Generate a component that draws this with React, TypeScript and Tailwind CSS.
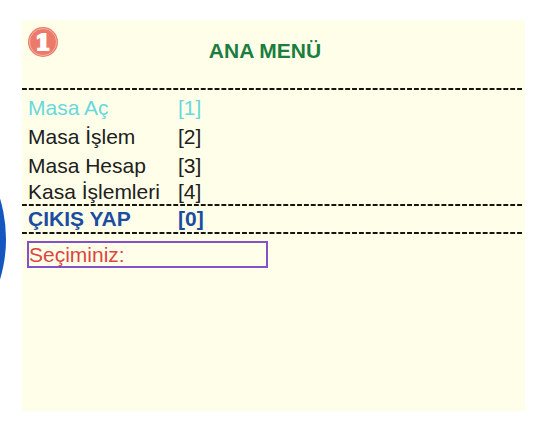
import React from "react";

const items = [
  { label: "Masa Aç", code: "[1]", style: "h-[29px] text-[#69d8dd]" },
  { label: "Masa İşlem", code: "[2]", style: "h-[29px] text-[#20201c]" },
  { label: "Masa Hesap", code: "[3]", style: "h-[29px] text-[#20201c]" },
  { label: "Kasa İşlemleri", code: "[4]", style: "h-[14px] text-[#20201c]" },
];

function DashedRule() {
  return (
    <svg className="block h-[2px] w-full" aria-hidden="true">
      <line x1="0" y1="1" x2="100%" y2="1" pathLength="509" stroke="#15150f" strokeWidth="2" strokeDasharray="5 2" />
    </svg>
  );
}

function StepBadge() {
  return (
    <span className="relative flex size-[30px] items-center justify-center rounded-full bg-[#ec7a6a]">
      <span className="absolute inset-px rounded-full border border-[#f5b3a4]" />
      <span className="relative font-['DejaVu_Serif',serif] text-[22px] leading-[30px] font-bold text-white [-webkit-text-stroke:2px_white]">
        1
      </span>
    </span>
  );
}

export default function App() {
  return (
    <div className="relative flex min-h-screen flex-col overflow-hidden bg-white pt-5 pr-[11px] pb-[10px] pl-[22px] font-['Liberation_Sans',Arial,sans-serif] text-[21px] leading-6">
      <div className="absolute top-[99px] left-[-274px] size-[280px] rounded-full bg-[#1557c0]" />
      <main className="flex-1 bg-[#ffffe9] pr-[3px]">
        <header className="grid h-[68px] grid-cols-[30px_1fr_30px] items-start pt-[7px] pr-[14px]">
          <div className="pl-[6px]">
            <StepBadge />
          </div>
          <h1 className="pt-3 text-center font-bold text-[#1b7d40]">ANA MENÜ</h1>
        </header>
        <DashedRule />
        <ul className="pt-[3px] pb-[10px] pl-[6px]">
          {items.map((item) => (
            <li key={item.code} className={`grid grid-cols-[150px_1fr] items-center ${item.style}`}>
              <span>{item.label}</span>
              <span>{item.code}</span>
            </li>
          ))}
        </ul>
        <DashedRule />
        <div className="grid h-[26px] grid-cols-[150px_1fr] items-center pl-[6px] font-bold text-[#1b4da0]">
          <span>ÇIKIŞ YAP</span>
          <span>[0]</span>
        </div>
        <DashedRule />
        <div className="mt-[7px] ml-[5px] flex h-[27px] w-[241px] items-center border-2 border-[#8452c6] text-[#dd4540]">
          <label htmlFor="secim">Seçiminiz:</label>
          <input id="secim" type="text" className="min-w-0 flex-1 bg-transparent outline-none" />
        </div>
      </main>
    </div>
  );
}
